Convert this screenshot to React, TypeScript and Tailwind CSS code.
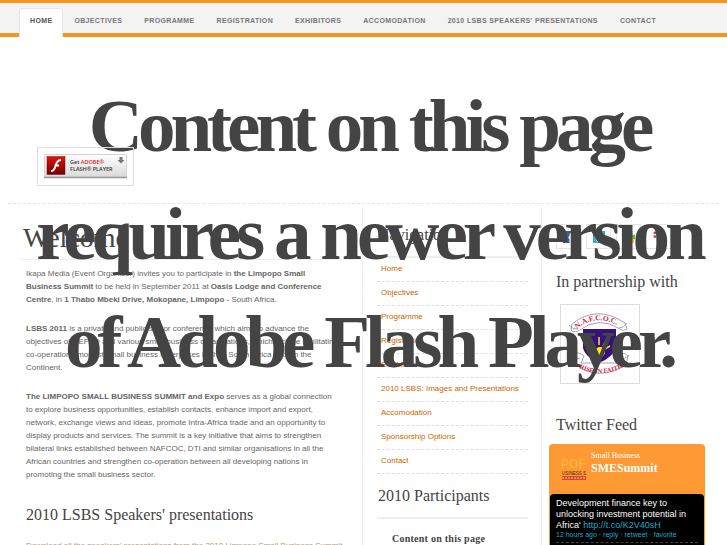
import type { ReactNode } from "react";

const tabs = [
  "OBJECTIVES",
  "PROGRAMME",
  "REGISTRATION",
  "EXHIBITORS",
  "ACCOMODATION",
  "2010 LSBS SPEAKERS' PRESENTATIONS",
  "CONTACT",
];

const links = [
  "Home",
  "Objectives",
  "Programme",
  "Registration",
  "Exhibitors",
  "2010 LSBS: Images and Presentations",
  "Accomodation",
  "Sponsorship Options",
  "Contact",
];

function TopBar() {
  return (
    <header className="h-[37px] border-t-[3px] border-b-4 border-[#f7941d] bg-[#f3f3f3]">
      <nav className="flex h-[34px] items-end pl-[19px] text-[7px] font-bold tracking-wider text-[#777]">
        <a href="#home" className="flex h-[29px] items-center rounded-t-[4px] border border-b-0 border-[#e6e6e6] bg-white px-[10px] pb-[3px] text-[#555]">
          HOME
        </a>
        {tabs.map((t) => (
          <a key={t} href="#tab" className="flex h-[29px] items-center px-[11px] pb-[2px] whitespace-nowrap">
            {t}
          </a>
        ))}
      </nav>
    </header>
  );
}

function FlashBadge() {
  return (
    <a
      href="#flash"
      aria-label="Get Adobe Flash Player"
      className="absolute top-[147px] left-[37px] border border-[#ddd] p-[6px]"
    >
      <svg width="83" height="25" viewBox="0 0 83 25" className="block">
        <defs>
          <linearGradient id="plate" x1="0" y1="0" x2="0" y2="1">
            <stop offset="0" stopColor="#fff" />
            <stop offset="1" stopColor="#d9d9d9" />
          </linearGradient>
          <linearGradient id="red" x1="0" y1="0" x2="0" y2="1">
            <stop offset="0" stopColor="#e3120b" />
            <stop offset="1" stopColor="#6d0202" />
          </linearGradient>
        </defs>
        <rect x="0.5" y="0.5" width="82" height="23" rx="1" fill="url(#plate)" stroke="#d4d4d4" />
        <path d="M0 23.5h83" stroke="#999" strokeWidth="1.5" />
        <rect x="3" y="2.5" width="18" height="18" fill="url(#red)" stroke="#8a0a06" strokeWidth="0.5" />
        <path d="M17 6c-4 0-4.500 3-5.500 6S10 17 7 17M10.500 11.500h4.500" fill="none" stroke="#fff" strokeWidth="2" />
        <path d="M75.500 3h3v3h2L77 9.500 73.500 6h2z" fill="#777" />
        <g fontFamily="'Open Sans', sans-serif" fontWeight="600" fontSize="5.500" fill="#333">
          <text x="26" y="10">Get <tspan fill="#e3231b">ADOBE®</tspan></text>
          <text x="26" y="17">FLASH® PLAYER</text>
        </g>
      </svg>
    </a>
  );
}

function SideHeading({ children, className = "" }: { children: ReactNode; className?: string }) {
  return (
    <h2 className={`font-['Liberation_Serif',serif] text-[16px] leading-[20px] whitespace-nowrap text-[#444] ${className}`}>
      {children}
    </h2>
  );
}

function Main() {
  return (
    <main className="mt-[4px] w-[355px] shrink-0 border-r border-[#eee] pt-[14px]">
      <h1 className="ml-[11px] h-[38px] border-b border-[#eee] pl-[4px] font-['Liberation_Serif',serif] text-[28px] leading-[32px] text-[#444]">
        Welcome
      </h1>
      <div className="pt-[7px] pl-[18px] text-[8px] leading-[13px] whitespace-nowrap text-[#666]">
        <p className="mb-[16px]">
          Ikapa Media (Event Organiser) invites you to participate in <b>the Limpopo Small</b><br />
          <b>Business Summit</b> to be held in September 2011 at <b>Oasis Lodge and Conference</b><br />
          <b>Centre</b>, in <b>1 Thabo Mbeki Drive, Mokopane, Limpopo</b> - South Africa.
        </p>
        <p className="mb-[16px]">
          <b>LSBS 2011</b> is a private and public sector conference which aims to advance the<br />
          objectives of NEPAD and various small business organisations, which include facilitating<br />
          co-operation amongst small business enterprises both in South Africa and on the<br />
          Continent.
        </p>
        <p>
          <b>The LIMPOPO SMALL BUSINESS SUMMIT and Expo</b> serves as a global connection<br />
          to explore business opportunities, establish contacts, enhance import and export,<br />
          network, exchange views and ideas, promote Intra-Africa trade and an opportunity to<br />
          display products and services. The summit is a key initiative that aims to strengthen<br />
          bilateral links established between NAFCOC, DTI and similar organisations in all the<br />
          African countries and strengthen co-operation between all developing nations in<br />
          promoting the small business sector.
        </p>
        <SideHeading className="mt-[24px]">2010 LSBS Speakers' presentations</SideHeading>
        <a href="#download" className="mt-[14px] block text-[#c09468]">
          Download all the speakers' presentations from the 2010 Limpopo Small Business Summit
        </a>
      </div>
    </main>
  );
}

function Navigation() {
  return (
    <aside className="mt-[4px] w-[179px] shrink-0 border-r border-[#eee] pt-[17px] pr-[13px] pl-[14px]">
      <SideHeading className="h-[33px] border-b-2 border-[#eee] pl-px">Navigation</SideHeading>
      <ul>
        {links.map((l) => (
          <li key={l} className="h-[24px] border-b border-dashed border-[#ddd] pl-[4px] text-[8px] leading-[22px] whitespace-nowrap">
            <a href="#link" className="text-[#cc6600]">{l}</a>
          </li>
        ))}
      </ul>
      <SideHeading className="mt-[12px] h-[33px] border-b-2 border-[#eee] pl-px">2010 Participants</SideHeading>
      <p className="pt-[14px] pl-[15px] font-['Liberation_Serif',serif] text-[10px] leading-[12px] font-bold tracking-wide whitespace-nowrap text-[#444]">
        Content on this page
      </p>
    </aside>
  );
}

function SocialIcons() {
  const box = "flex h-[25px] w-[25px] items-center justify-center border border-[#e4e4e4]";
  return (
    <div className="flex gap-[5px]">
      <a href="#facebook" aria-label="Facebook" className={box}>
        <svg width="12" height="12" viewBox="0 0 13 13"><path fill="#3b5998" d="M0 0h13v13H0z" /><path d="M11 3H9.500C8 3 8 4 8 5v8M6 7h5" stroke="#fff" strokeWidth="2" fill="none" /></svg>
      </a>
      <a href="#twitter" aria-label="Twitter" className={box}>
        <svg width="12" height="12" viewBox="0 0 13 13"><path fill="#35a9d6" d="M0 0h13v13H0z" /><path d="M4 2v6q0 3 3 3h3M4 5h6" stroke="#fff" strokeWidth="2" fill="none" /></svg>
      </a>
      <a href="#share" aria-label="Google" className={box}>
        <svg width="12" height="12" viewBox="0 0 13 13"><path fill="#4285d6" d="M3 0h7v7H3z" /><path fill="#7cb342" d="M6 4h7v5H6z" /><path fill="#f2c230" d="M4 9h8v4H4z" /></svg>
      </a>
      <a href="#feed" aria-label="Bookmarks" className={box}>
        <svg width="12" height="12" viewBox="0 0 13 13"><g fill="#d9382b"><circle cx="2" cy="2" r="1.500" /><circle cx="6" cy="2" r="1.500" /><circle cx="2" cy="6" r="1.500" /></g><circle cx="6" cy="6" r="1.500" fill="#e88b80" /></svg>
      </a>
    </div>
  );
}

function Crest() {
  return (
    <div className="ml-[4px] flex h-[80px] w-[80px] items-center justify-center border border-[#ddd]">
      <svg width="66" height="66" viewBox="0 0 66 66">
        <defs>
          <path id="arcTop" d="M10 18Q31 0 58 19" />
          <path id="arcBottom" d="M12 57Q33 68 57 56" />
        </defs>
        <g fill="#fff" stroke="#8d86b5" strokeWidth="0.800">
          <path d="M5 13Q30 -7 58 12l2 6q-4 3-7 0Q32 4 11 20q-5 2-7-1z" />
          <path d="M4 45q7-6 13 0l-3 7h38l-2-7q7-5 11 0l-2 8Q33 72 6 52z" />
          <path d="M3 44q5 5 10 3M53 47q5 2 9-3M2 14q4 5 9 4M52 17q5 0 8-5" fill="none" />
        </g>
        <path d="M16 18h33v19q-3 9-17 15Q18 46 16 37z" fill="#35107e" />
        <path d="M32 26v8M24 29l4 7M40 28l-4 7M21 36l6 3M43 35l-5 3" stroke="#f4e41c" strokeWidth="1.500" />
        <circle cx="33" cy="41" r="5" fill="#ffee00" />
        <g fontFamily="'Liberation Serif', serif" fontWeight="700" fontSize="7.500" fill="#d81e3a">
          <text><textPath href="#arcTop">N.A.F.C.O.C.</textPath></text>
          <text fontSize="6.500"><textPath href="#arcBottom">RISE IN FAITH</textPath></text>
        </g>
      </svg>
    </div>
  );
}

function Twitter() {
  return (
    <section className="mt-[9px] ml-[-7px] w-[156px] rounded-[4px] bg-[#ff9933] px-px">
      <div className="flex h-[50px] pt-[7px] pl-[12px] font-['Liberation_Serif',serif] text-white">
        <svg width="24" height="24" viewBox="0 0 24 24" className="mt-[7px] overflow-visible">
          <g fontFamily="'Liberation Sans', sans-serif">
            <text x="-1" y="10" fontSize="12" fontWeight="700" fill="#fbb03b">POF</text>
            <text x="0" y="17" fontSize="4.500" fill="#3c2a12">USINESS S</text>
          </g>
          <path fill="#d9482f" d="M0 18h24v4H0z" />
          <path stroke="#f6c08a" strokeDasharray="2 1" d="M0 20h24" />
        </svg>
        <div className="ml-[5px] whitespace-nowrap">
          <h3 className="text-[8px] leading-[10px]">Small Business</h3>
          <h4 className="text-[12px] leading-[14px] font-bold">SMESummit</h4>
        </div>
      </div>
      <div className="h-[70px] rounded-t-[4px] bg-black px-[6px] pt-[4px] whitespace-nowrap text-white">
        <p className="text-[9px] leading-[11px]">
          Development finance key to<br />
          unlocking investment potential in<br />
          Africa' <a href="#tweet" className="text-[#1fa9c9]">http://t.co/K2V40sH</a>
        </p>
        <p className="border-b border-dashed border-[#444] pb-[3px] text-[7px] leading-[8px] text-[#1fa9c9]">
          <a href="#ago">12 hours ago</a> · <a href="#reply">reply</a> · <a href="#retweet">retweet</a> · <a href="#fav">favorite</a>
        </p>
      </div>
    </section>
  );
}

export default function App() {
  return (
    <div className="relative h-screen overflow-hidden bg-white font-['Liberation_Sans',Arial,sans-serif]">
      <TopBar />
      <div className="mx-[8px] h-[167px] border-b border-dashed border-[#e4e4e4]" />
      <div className="mx-[8px] flex items-stretch">
        <Main />
        <Navigation />
        <aside className="flex-1 pt-[20px] pl-[14px]">
          <SocialIcons />
          <SideHeading className="mt-[23px]">In partnership with</SideHeading>
          <div className="pt-[12px]">
            <Crest />
          </div>
          <SideHeading className="mt-[31px]">Twitter Feed</SideHeading>
          <Twitter />
        </aside>
      </div>
      <div className="pointer-events-none absolute inset-x-0 top-[72px] pl-[11px] text-center font-['Liberation_Serif',serif] text-[75px] leading-[108px] font-bold tracking-[-5px] whitespace-nowrap text-[#444]">
        Content on this page<br />requires a newer version<br />of Adobe Flash Player.
      </div>
      <FlashBadge />
    </div>
  );
}
